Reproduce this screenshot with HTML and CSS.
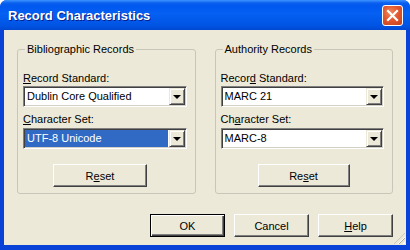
FILE: index.html
```html
<!DOCTYPE html>
<html lang="en">
<head>
    <meta charset="UTF-8">
    <title>Record Characteristics</title>
    <link rel="stylesheet" href="styles.css">
</head>
<body>

    <div class="window">
        <div class="titlebar">
            <span class="title">Record Characteristics</span>
            <span class="close">
                <svg width="21" height="21" viewBox="0 0 21 21">
                    <path d="M6 6 L15 15 M15 6 L6 15" stroke="#fff" stroke-width="2.2" stroke-linecap="square"/>
                </svg>
            </span>
        </div>

        <div class="client">
            <div class="groups">
                <fieldset class="group">
                    <legend>Bibliographic Records</legend>
                    <div class="label"><u>R</u>ecord Standard:</div>
                    <div class="combo">
                        <span class="value">Dublin Core Qualified</span>
                        <span class="arrow"></span>
                    </div>
                    <div class="label second"><u>C</u>haracter Set:</div>
                    <div class="combo second">
                        <span class="value selected">UTF-8 Unicode</span>
                        <span class="arrow"></span>
                    </div>
                    <button class="btn reset">R<u>e</u>set</button>
                </fieldset>

                <fieldset class="group">
                    <legend>Authority Records</legend>
                    <div class="label">Recor<u>d</u> Standard:</div>
                    <div class="combo">
                        <span class="value">MARC 21</span>
                        <span class="arrow"></span>
                    </div>
                    <div class="label second">Ch<u>a</u>racter Set:</div>
                    <div class="combo second">
                        <span class="value">MARC-8</span>
                        <span class="arrow"></span>
                    </div>
                    <button class="btn reset right">Re<u>s</u>et</button>
                </fieldset>
            </div>

            <div class="actions">
                <button class="btn default">OK</button>
                <button class="btn">Cancel</button>
                <button class="btn"><u>H</u>elp</button>
            </div>

            <div class="grip"></div>
        </div>
    </div>

</body>
</html>
```

FILE: styles.css
```css
body {
    margin: 0;
    padding: 0;
    background: #fff;
    font-family: 'Liberation Sans', Arial, sans-serif;
    font-size: 11px;
    color: #000;
}
.window {
    width: 410px;
    height: 250px;
    box-sizing: border-box;
    display: flex;
    flex-direction: column;
    background: #0842d6; /* blue frame */
    border-radius: 7px 7px 0 0;
    overflow: hidden;
}
.titlebar {
    height: 30px;
    flex: none;
    display: flex;
    align-items: center;
    justify-content: space-between;
    padding: 0 7px 0 8px;
    background: linear-gradient(#3d95ff 0, #0a5fef 3px, #0058ee 6px, #0560f3 45%, #0054e3 85%, #0048d2 100%);
}
.title {
    color: #fff;
    font-weight: bold;
    font-size: 13px;
    text-shadow: 1px 1px #0a1e8c;
    padding-top: 1px;
}
.close {
    width: 21px;
    height: 21px;
    box-sizing: border-box;
    border: 1px solid #fff;
    border-radius: 3px;
    background: radial-gradient(circle at 40% 35%, #f08a5e 0, #e2582f 45%, #c2401c 100%);
    display: flex;
}
.close svg {
    margin: -1px;
}
.client {
    flex: 1;
    margin: 0 4px 5px 4px;
    background: #ece9d8;
    position: relative;
    display: flex;
    flex-direction: column;
}
.groups {
    display: flex;
    gap: 19px;
    padding: 12px 13px 0 13px;
}
.group {
    flex: 1;
    margin: 0;
    min-width: 0;
    display: flex;
    flex-direction: column;
    padding: 0 8px 6px 5px;
    border: 1px solid #c8c6b8;
    border-radius: 3px;
}
.group legend {
    padding: 0 2px;
    margin-left: 2px;
    line-height: 14px;
}
.label {
    line-height: 13px;
    margin-top: 16px;
}
.label.second {
    margin-top: 6px;
}
.combo {
    height: 21px;
    margin-top: 1px;
    box-sizing: border-box;
    display: flex;
    background: #fff;
    border: 1px solid;
    border-color: #808080 #fff #fff #808080;
    box-shadow: inset 1px 1px #404040, inset -1px -1px #d4d0c8;
    padding: 1px;
}
.combo.second {
    margin-top: 2px;
}
.value {
    flex: 1;
    padding-left: 2px;
    line-height: 17px;
    margin-right: 1px;
}
.value.selected {
    background: #316ac5;
    color: #fff;
}
.arrow {
    width: 16px;
    height: 17px;
    box-sizing: border-box;
    background: #ece9d8;
    border: 1px solid;
    border-color: #ece9d8 #404040 #404040 #ece9d8;
    box-shadow: inset 1px 1px #fff, inset -1px -1px #808080;
    display: flex;
    align-items: center;
    justify-content: center;
}
.arrow::after {
    content: "";
    border-left: 4px solid transparent;
    border-right: 4px solid transparent;
    border-top: 4px solid #000;
    margin-top: 1px;
}
.btn {
    font-family: inherit;
    font-size: 11px;
    color: #000;
    width: 75px;
    height: 23px;
    padding: 0;
    background: #ece9d8;
    border: 1px solid;
    border-color: #fff #404040 #404040 #fff;
    box-shadow: inset -1px -1px #808080;
}
.btn.reset {
    width: 94px;
    margin-top: 15px;
    margin-left: 30px;
}
.btn.reset.right {
    width: 92px;
    margin-left: 37px;
}
.btn.default {
    border: 1px solid #000;
    box-shadow: inset 1px 1px #fff, inset -1px -1px #404040, inset -2px -2px #808080;
}
.actions {
    display: flex;
    justify-content: flex-end;
    gap: 9px;
    padding: 20px 13px 0 0;
}
.grip {
    position: absolute;
    right: 1px;
    bottom: 1px;
    width: 11px;
    height: 11px;
    background: repeating-linear-gradient(135deg, transparent 0 2px, #fff 2px 3px, #aca899 3px 4px);
    clip-path: polygon(100% 0, 100% 100%, 0 100%);
}
```
